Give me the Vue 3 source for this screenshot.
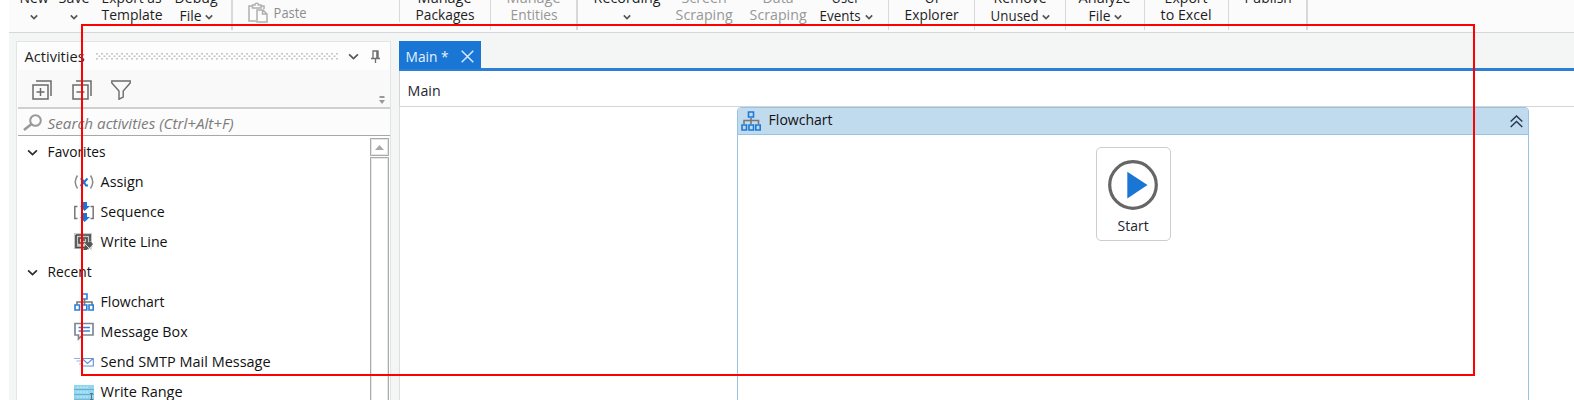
<script setup>
import { h } from 'vue'

// Single-line label drawn at a fixed width on a 13px baseline
const Label = (props) =>
  h('svg', { class: 'label', width: props.w, height: 17 }, [
    h('text', { x: -0.4, y: 13, fill: 'currentColor', textLength: props.w, lengthAdjust: 'spacingAndGlyphs' }, props.t),
  ])
Label.props = ['t', 'w']

const Chevron = (props) =>
  h('svg', { class: 'chevron', width: props.s, height: props.s, viewBox: '0 0 10 10' }, [
    h('path', { d: 'M1 3L5 7L9 3', fill: 'none', stroke: 'currentColor', 'stroke-width': props.sw || 1.5 }),
  ])
Chevron.props = ['s', 'sw']

// pad: space before the button, width: button width
const groups = [
  {
    width: 224, thick: true,
    items: [
      { pad: 9, width: 32, a: ['New', 29], chev: true },
      { pad: 8, width: 32, a: ['Save', 31], chev: true },
      { pad: 11, width: 62, a: ['Export as', 60], b: ['Template', 61] },
      { pad: 10, width: 46, a: ['Debug', 43], b: ['File', 22], chev: true },
    ],
  },
  { width: 167, paste: true, short: true, items: [] },
  { width: 91, items: [{ pad: 15, width: 60, a: ['Manage', 54], b: ['Packages', 59] }] },
  { width: 87, thick: true, items: [{ pad: 15, width: 56, a: ['Manage', 54], b: ['Entities', 47] }], off: true },
  {
    width: 311,
    items: [
      { pad: 14, width: 70, a: ['Recording', 67], chev: true },
      { pad: 12, width: 60, a: ['Screen', 45], b: ['Scraping', 57], off: true },
      { pad: 14, width: 60, a: ['Data', 31], b: ['Scraping', 57], off: true },
      { pad: 9, width: 58, a: ['User', 28], b: ['Events', 41], chev: true, gap: 4 },
    ],
  },
  { width: 86, items: [{ pad: 13, width: 60, a: ['UI', 14], b: ['Explorer', 54] }] },
  { width: 91, items: [{ pad: 14, width: 62, a: ['Remove', 53], b: ['Unused', 48], chev: true }] },
  { width: 79, items: [{ pad: 10, width: 58, a: ['Analyze', 52], b: ['File', 22], chev: true }] },
  { width: 84, items: [{ pad: 12, width: 58, a: ['Export', 43], b: ['to Excel', 51] }] },
  { width: 79, thick: true, items: [{ pad: 14, width: 50, a: ['Publish', 47] }] },
]

const rows = [
  { group: true, t: 'Favorites', w: 58 },
  { icon: 'assign', t: 'Assign', w: 43 },
  { icon: 'sequence', t: 'Sequence', w: 64 },
  { icon: 'line', t: 'Write Line', w: 67 },
  { group: true, t: 'Recent', w: 44 },
  { icon: 'flow', t: 'Flowchart', w: 64 },
  { icon: 'message', t: 'Message Box', w: 87 },
  { icon: 'mail', t: 'Send SMTP Mail Message', w: 170 },
  { icon: 'range', t: 'Write Range', w: 82 },
]
</script>

<template>
  <div class="app">
    <div class="ribbon">
      <div
        v-for="(g, i) in groups" :key="i" class="group"
        :class="{ off: g.off }" :style="{ width: g.width + 'px' }"
      >
        <div v-if="g.paste" class="paste">
          <svg width="20" height="21" viewBox="0 0 20 21" fill="none" stroke="#b0b0b0" stroke-width="1.5">
            <path d="M8 19H1V4H4M13 4H16V7" />
            <path d="M4.500 6V3H7C7 .7 10.500 .7 10.500 3H13V6Z" />
            <path d="M9 8H15L19 12V20H9ZM14.500 8V12H19" />
          </svg>
          <Label t="Paste" :w="33" />
        </div>
        <div
          v-for="(it, k) in g.items" :key="k" class="button" :class="{ off: it.off }"
          :style="{ marginLeft: it.pad + 'px', width: it.width + 'px' }"
        >
          <Label :t="it.a[0]" :w="it.a[1]" />
          <div class="second" :class="{ drop: it.chev }" :style="{ gap: (it.gap || 3) + 'px' }">
            <Label v-if="it.b" :t="it.b[0]" :w="it.b[1]" />
            <Chevron v-if="it.chev" :s="8" :sw="2" />
          </div>
        </div>
        <i class="sep" :class="{ thick: g.thick, short: g.short }"></i>
      </div>
    </div>

    <div class="work">
      <aside class="panel">
        <header class="title">
          <Label t="Activities" :w="60" />
          <svg class="grip" width="242" height="7">
            <defs>
              <pattern id="dots" width="5" height="5" patternUnits="userSpaceOnUse">
                <path d="M0 0H2V1.500H0ZM2.500 2.500H4.500V4H2.500Z" fill="#c6c6c6" />
              </pattern>
            </defs>
            <rect width="242" height="7" fill="url(#dots)" />
          </svg>
          <Chevron class="fold" :s="11" :sw="1.5" />
          <svg class="pin" width="9" height="13" fill="none" stroke="#6f6f6f">
            <path d="M2 8V1H7V8M0 8.500H9M4.500 8V13" stroke-width="1.3" />
            <path d="M6.200 1V8" stroke-width="2" />
          </svg>
        </header>
        <div class="tools">
          <svg width="20" height="20" fill="none" stroke="#6b6b6b" stroke-width="1.5">
            <path d="M1 5H16V19H1ZM4 1H19V16M4.500 12H12.500M8.500 8V16" />
          </svg>
          <svg width="20" height="20" fill="none" stroke="#6b6b6b" stroke-width="1.5">
            <path d="M1 5H16V19H1ZM4 1H19V16M4.500 12H12.500" />
          </svg>
          <svg class="funnel" width="20" height="20" fill="none" stroke="#6b6b6b" stroke-width="1.400">
            <path d="M.8 1H19.200V3L12.200 11V17L8 19.200V11L.8 3Z" />
          </svg>
          <svg class="more" width="6" height="8" fill="#999"><path d="M.5 0H5.500V2H.5ZM0 4H6L3 8Z" /></svg>
        </div>
        <div class="search">
          <svg width="19" height="17" fill="none" stroke="#999">
            <circle cx="12.500" cy="6.500" r="5.300" stroke-width="2" />
            <path d="M8.500 10L1 16" stroke-width="2.600" />
          </svg>
          <Label t="Search activities (Ctrl+Alt+F)" :w="186" />
        </div>
        <div class="body">
          <div class="list">
            <div v-for="r in rows" :key="r.t" class="row" :class="{ head: r.group }">
              <Chevron v-if="r.group" :s="11" />
              <svg v-else width="20" height="20" viewBox="0 0 20 20" fill="none">
                <g v-if="r.icon === 'assign'">
                  <path d="M3.500 3.500Q-1 10 3.500 16.500M16.500 3.500Q21 10 16.500 16.500" stroke="#888" stroke-width="1.500" />
                  <path d="M6.500 7H8L12 13.500H14M13.500 6.500L6.500 14" stroke="#1a78d0" stroke-width="2" />
                </g>
                <g v-else-if="r.icon === 'sequence'">
                  <path d="M3.500 4.500H.8V16.500H3.500M16.500 4.500H19.200V16.500H16.500" stroke="#777" stroke-width="1.500" />
                  <path d="M8 0H13V4H16L10.500 9L6 4H8ZM8 11H13V15H16L10.500 20L6 15H8Z" fill="#1a76d4" />
                </g>
                <g v-else-if="r.icon === 'line'">
                  <path d="M0 1H18V17H0Z" fill="#c9c9c9" />
                  <path d="M2 3H17M2 3V15.500H11M16 3V9M5 6H13V11H5ZM7 8H11" stroke="#4b4b4b" stroke-width="1.700" />
                  <path d="M9 18L12 12L16 9L19 12L14 18Z" fill="#555" />
                  <path d="M10 11L18 19M13 18L19 14" stroke="#ddd" />
                </g>
                <g v-else-if="r.icon === 'flow'" stroke-width="1.600">
                  <path d="M10.500 7V10M3 13V10H18V13M10.500 10V13" stroke="#777" />
                  <path d="M8 2H13V7H8ZM1 13H5.500V18H1ZM8.200 13H12.800V18H8.200ZM15 13H19.200V18H15Z" stroke="#2b7fd8" />
                </g>
                <g v-else-if="r.icon === 'message'">
                  <path d="M1 1.500H19V13H8.500L4.500 17V13H1Z" stroke="#7c8794" stroke-width="1.700" />
                  <path d="M4.500 5.500H16M4.500 9H16" stroke="#3b82d6" stroke-width="1.600" />
                </g>
                <g v-else-if="r.icon === 'mail'">
                  <path d="M0 6.500H6M2.500 9H7M5 12H7" stroke="#8fb4e0" />
                  <path d="M8 6.500H19.300V14H8ZM8 6.500L13.500 11.500L19 6.500" stroke="#5f92d0" stroke-width="1.100" />
                </g>
                <g v-else>
                  <path d="M0 3H20V17.500H0Z" fill="#93d6f0" />
                  <path d="M0 7.500H20M0 12.500H20M0 17.300H20" stroke="#6aaecb" />
                  <path d="M3 5.300H14M3 10H14M3 15H14" stroke="#c3ebf8" stroke-dasharray="2 1" />
                  <path d="M16 11.500H19M17.500 11.500V17.500M16 17.500H19" stroke="#5a7584" />
                </g>
              </svg>
              <Label :t="r.t" :w="r.w" />
            </div>
          </div>
          <div class="scroll">
            <div class="up"><svg width="9" height="5"><path d="M0 5L4.500 0L9 5Z" fill="#a9a9a9" /></svg></div>
            <div class="thumb"></div>
          </div>
        </div>
      </aside>

      <main class="editor">
        <div class="tabs">
          <div class="tab">
            <Label t="Main *" :w="43" />
            <svg width="13" height="13"><path d="M.7 .7L12.300 12.300M12.300 .7L.7 12.300" stroke="#d6e8fa" stroke-width="1.500" /></svg>
          </div>
        </div>
        <div class="crumb"><Label t="Main" :w="33" /></div>
        <div class="canvas">
          <section class="chart">
            <header>
              <svg width="20" height="20" fill="none" stroke-width="1.600">
                <path d="M10 7V10M3 13V9.500H17.500V13M10 10V13" stroke="#777" />
                <path d="M7.500 1H12.500V6H7.500ZM1 14H5.500V19H1ZM8 14H12.500V19H8ZM14.800 14H19.200V19H14.800Z" stroke="#1f78d4" />
              </svg>
              <Label t="Flowchart" :w="64" />
              <svg class="collapse" width="13" height="13" fill="none" stroke="#27364a" stroke-width="1.400">
                <path d="M.7 6.500L6.500 1L12.300 6.500M.7 12L6.500 6.500L12.300 12" />
              </svg>
            </header>
            <div class="start">
              <svg width="50" height="50">
                <circle cx="25" cy="25" r="23.300" fill="#fff" stroke="#666" stroke-width="3.200" />
                <path d="M19.300 11.800L39.500 25L19.300 38.500Z" fill="#1a76d4" />
              </svg>
              <Label t="Start" :w="31" />
            </div>
          </section>
        </div>
      </main>
    </div>
    <div class="highlight"></div>
  </div>
</template>

<style scoped>
.app { position: relative; width: 1574px; height: 400px; overflow: hidden; box-sizing: border-box; padding-left: 9px; background: #fff; color: #1e1e1e; font: 14.5px "Open Sans", "Noto Sans", sans-serif; }
.app *, .app { box-sizing: border-box; }
.app svg { display: block; flex: none; }
.label { overflow: visible; }
.ribbon { display: flex; height: 33px; background: #fbfbfb; border-bottom: 1px solid #d5d7dc; }
.group { display: flex; flex: none; height: 32px; }
.off { color: #979797; }
.button { flex: none; display: flex; flex-direction: column; align-items: center; margin-top: -10px; }
.second { display: flex; align-items: center; height: 17px; }
.second.drop { margin-top: 1px; }
.second .chevron { color: #555; }
.paste { display: flex; gap: 6px; padding: 2px 0 0 15px; color: #8d8d8d; }
.paste .label { margin-top: 3px; }
.sep { flex: none; width: 1px; height: 30px; margin-left: auto; background: #d7d8db; }
.sep.thick { width: 2px; }
.sep.short { height: 22px; }
.work { display: flex; height: 367px; padding: 8px 0 0 7px; background: #f4f6f5; }
.panel { flex: none; width: 375px; height: 360px; border: solid #e3e5e4; border-width: 1px 1px 0; background: #fff; display: flex; flex-direction: column; }
.title { flex: none; display: flex; height: 28px; padding: 7px 0 0 8px; background: #fdfdfd; }
.grip { margin: 4px 0 0 11px; }
.fold { margin: 2px 0 0 10px; color: #555; }
.pin { margin: 1px 0 0 12px; }
.tools { flex: none; display: flex; gap: 20px; height: 39px; padding: 10px 0 0 14px; margin-left: 1px; background: #f9f9f9; border-bottom: 2px solid #cfcfcf; }
.funnel { margin-left: -1px; }
.more { margin: 16px 5px 0 auto; }
.search { flex: none; display: flex; gap: 6px; height: 27px; margin-left: 1px; padding: 5px 0 0 5px; background: #fcfcfc; border-bottom: 1px solid #a8a8a8; color: #7b7b7b; font-style: italic; }
.search .label { margin-top: 2px; }
.body { flex: 1; display: flex; overflow: hidden; color: #111; }
.list { flex: 1; padding-top: 1px; }
.row { display: flex; gap: 7px; height: 30px; padding: 5px 0 0 57px; }
.row .label { margin-top: 2px; }
.row.head { gap: 10px; padding-left: 10px; }
.row.head .chevron { margin-top: 5px; color: #2a2a2a; }
.scroll { flex: none; width: 20px; padding: 2px 1px 0 0; }
.up { height: 18px; border: 1px solid #aaa; box-shadow: inset 0 0 0 1px #e5e5e5; padding: 6px 0 0 4px; }
.thumb { height: 260px; margin-top: 1px; border: 1px solid #aaa; box-shadow: inset 0 0 0 1px #e8e8e8; }
.editor { flex: 1; margin-left: 8px; display: flex; flex-direction: column; }
.tabs { flex: none; height: 30px; border-bottom: 3px solid #2b80d5; }
.tab { display: flex; width: 82px; height: 28px; padding: 8px 0 0 7px; gap: 12px; background: #1a76d4; color: #e6f1fc; }
.tab svg:last-child { margin-top: 1px; }
.crumb { flex: none; height: 36px; padding: 12px 0 0 8px; background: #fff; border: solid #d5d5d5; border-width: 0 0 1px 1px; color: #26262e; }
.canvas { flex: 1; background: #fff; border-left: 1px solid #dedede; padding-left: 337px; }
.chart { width: 792px; height: 300px; border: 1px solid #98c4e2; border-radius: 4px 4px 0 0; background: #fff; }
.chart header { display: flex; height: 27px; padding: 3px 5px 0 3px; background: #c1dbee; border-bottom: 1px solid #98c4e2; border-radius: 3px 3px 0 0; color: #111; }
.chart header .label { margin: 1px 0 0 8px; }
.collapse { margin: 4px 0 0 auto; }
.start { width: 75px; height: 94px; margin: 12px 0 0 358px; border: 1px solid #cdcdd0; border-radius: 5px; padding: 12px 0 0 11px; color: #1c2433; }
.start .label { margin: 8px 0 0 10px; }
.highlight { position: absolute; left: 81px; top: 24px; width: 1394px; height: 352px; border: 2px solid #f00; pointer-events: none; }
</style>

<style>
body { background: #fff; }
</style>
